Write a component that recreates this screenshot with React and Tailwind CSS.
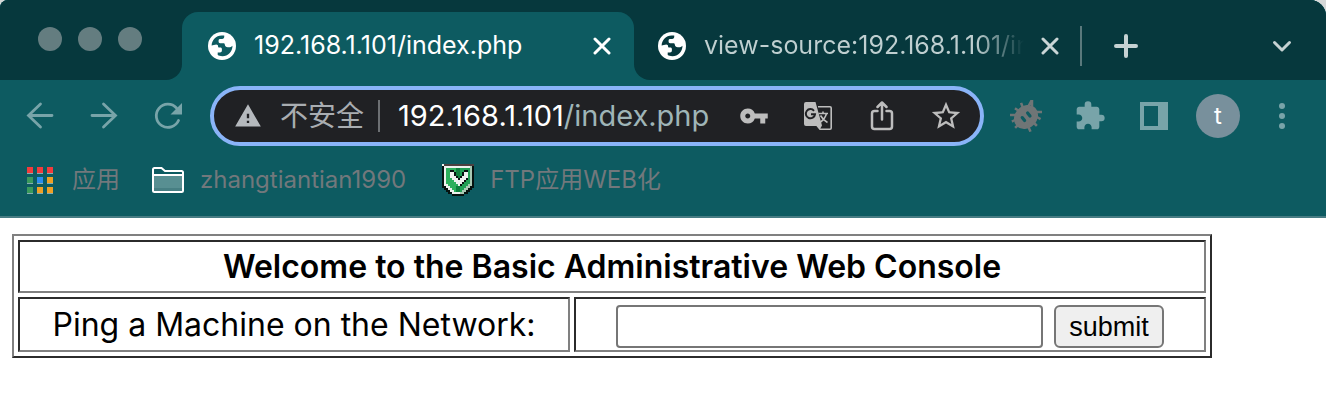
import { MdExtension, MdStarBorder, MdVpnKey, MdWarning } from "react-icons/md";

function Globe() {
  return (
    <svg viewBox="0 0 28 28" className="size-7 shrink-0" aria-hidden="true">
      <circle cx="14" cy="14" r="14" fill="#fff" />
      <path
        className="fill-current"
        d="M3.600 13.600C3.800 8.200 8 3.700 13.600 3.600h2.600c.4 2-.4 3.400-2.200 3.500h-1.800c-1 0-1.600.5-1.600 1.500v1.200c0 .9.6 1.400 1.500 1.400h3.300c.9 0 1.300.5 1.400 1.300.2 1.700 1.300 2.700 3 2.700h1.500c1 0 1.800-.5 3.200-1.500-.1 5.900-4.500 10.500-10 10.600-2.300 0-3.700-.5-4.800-1.200v-2.500h2.300c1.200 0 1.900-.8 1.900-2v-1.500c0-1-.6-1.600-1.600-1.600h-1.100c-.7 0-1.100-.4-1.100-1.100 0-1.200-.7-1.900-1.900-1.900z"
      />
    </svg>
  );
}

function Cross() {
  return (
    <svg viewBox="0 0 18 18" className="size-[18px]" fill="none" stroke="currentColor" strokeWidth="3" strokeLinecap="round" aria-hidden="true">
      <path d="M2 2l14 14M16 2L2 16" />
    </svg>
  );
}

const shieldRows = [
  "WBBBBBBBBBBBBBBB",
  "KWWWWWWWWWWWWWLK",
  "KWGGGGGDDMMMMMLK",
  "KWGGKKGDDMMKKMLK",
  "KWGGWWKDDMKWWMLK",
  "KWGGWWKDDMKWWMLK",
  "KWGGWWWKDKWWWMLK",
  "KWGGGWWWKWWWKMLK",
  "KWGGGGWWWWWKMMLK",
  "KWGGGGGWWWKMMMLK",
  "KWWGGGGGWKMMMLLK",
  "KKWWGGGDDMMMLLKK",
  ".KKWWGGDDMMLLKK.",
  "..KKWWGDDMLLKK..",
  "...KKWWWWLLKK...",
  ".....KKKKKK.....",
];
const shieldColors = { W: "#eef2ef", B: "#4b4040", K: "#061210", L: "#a9c9b4", G: "#2db05c", D: "#0e7f3d", M: "#1f9f54" };

function Shield() {
  return (
    <svg viewBox="0 0 16 16" className="size-8" shapeRendering="crispEdges" aria-hidden="true">
      {shieldRows.flatMap((row, y) =>
        [...row].map((c, x) => (c === "." ? null : <rect key={`${x}-${y}`} x={x} y={y} width="1" height="1" fill={shieldColors[c]} />)),
      )}
    </svg>
  );
}

const appDots = ["#f23c3c", "#f23c3c", "#f23c3c", "#3a9a5c", "#2a8cf0", "#f0a024", "#3a9a5c", "#f0a024", "#f0a024"];

function AppsGrid() {
  return (
    <svg viewBox="0 0 26 27" className="h-[27px] w-[26px]" shapeRendering="crispEdges" aria-hidden="true">
      {appDots.map((c, i) => (
        <g key={i} transform={`translate(${(i % 3) * 10} ${Math.floor(i / 3) * 10})`}>
          <rect width="6" height="7" fill="#86adb0" />
          <rect width="6" height="6" fill={c} />
        </g>
      ))}
    </svg>
  );
}

function Folder() {
  return (
    <svg viewBox="0 0 32 26" className="h-[26px] w-8" aria-hidden="true">
      <path d="M1 2.500Q1 1 2.500 1H9.500L13 4H29.500Q31 4 31 5.500V23.500Q31 25 29.500 25H2.500Q1 25 1 23.500Z" fill="#0d5b61" stroke="#fff" strokeWidth="2" />
      <path d="M2 9h28v15H2z" fill="#588f92" />
      <path d="M2 21h28v3H2z" fill="#477f83" />
      <path d="M1 8h30" stroke="#fff" strokeWidth="2" />
    </svg>
  );
}

function Bug() {
  return (
    <svg viewBox="0 0 32 32" className="size-8" aria-hidden="true">
      <path
        d="M13 8l-1.500-4M18 7l3-5.500M22 6V1M25 12h6M27 17l2.500 1.500M23 22l3 3M18 26l2 4.500M9 11L6 9M6 15H1M7 19l-4 2M8 25l-2 2"
        stroke="#6f7576"
        strokeWidth="2.500"
        fill="none"
        strokeLinecap="square"
      />
      <ellipse cx="16" cy="17" rx="13" ry="11" transform="rotate(-45 16 17)" fill="#6f7576" />
      <path d="M12.200 17.600l2.400 3M17.600 13l2.400 3" stroke="#0d5b61" strokeWidth="3.200" strokeLinecap="round" />
    </svg>
  );
}

function Translate() {
  return (
    <svg viewBox="0 0 28 28" className="size-7" fill="none" aria-hidden="true">
      <path d="M14 4.800H26Q27.200 4.800 27.200 6V26Q27.200 27.200 26 27.200H16L13 23.500" stroke="currentColor" strokeWidth="1.600" />
      <path d="M2 0H11.500L18 23.500L16 27L13.500 24H2Q0 24 0 22V2Q0 0 2 0z" fill="currentColor" />
      <path d="M10 8.800A4.600 4.600 0 1 0 11 12.300H7" stroke="#202124" strokeWidth="2" />
      <path d="M14.500 11.500H24M19 9.500v2M22.500 11.500Q21 17 16.500 20M16.500 13.500Q19 18 23.500 20.500" stroke="currentColor" strokeWidth="1.600" />
    </svg>
  );
}

function ToolButton({ label, children }) {
  return (
    <button type="button" aria-label={label} className="flex h-11 w-16 shrink-0 items-center justify-center">
      {children}
    </button>
  );
}

function TabStrip() {
  return (
    <div className="flex h-20 bg-[#0d5b61]">
      <div className="flex w-[182px] shrink-0 items-start gap-4 rounded-br-2xl bg-[#06383d] pt-[27px] pl-[38px]">
        <span className="size-6 rounded-full bg-[#647d80]" />
        <span className="size-6 rounded-full bg-[#647d80]" />
        <span className="size-6 rounded-full bg-[#647d80]" />
      </div>
      <div className="w-[452px] shrink-0 bg-linear-to-b from-[#06383d] from-50% to-[#0d5b61] to-50% pt-3">
        <div className="flex h-full items-center rounded-t-2xl bg-[#0d5b61] pr-[23px] pl-[26px] text-[#0d5b61]">
          <Globe />
          <span className="ml-[18px] flex-1 truncate text-[25px] text-white">192.168.1.101/index.php</span>
          <button type="button" aria-label="Close tab" className="text-white">
            <Cross />
          </button>
        </div>
      </div>
      <div className="flex min-w-0 flex-1 items-center rounded-bl-2xl bg-[#06383d] pt-3 pr-3 pl-6 text-[#06383d]">
        <Globe />
        <span className="ml-[18px] w-[320px] overflow-hidden bg-linear-to-r from-[#bfcfd0] from-85% to-transparent bg-clip-text text-[25px] whitespace-nowrap text-transparent">
          view-source:192.168.1.101/index.php
        </span>
        <button type="button" aria-label="Close tab" className="ml-[17px] text-[#c9d5d6]">
          <Cross />
        </button>
        <span className="ml-[21px] h-10 w-0.5 bg-[#5a797c]" />
        <button type="button" aria-label="New tab" className="ml-8 text-[#c5d2d3]">
          <svg viewBox="0 0 24 24" className="size-6" fill="none" stroke="currentColor" strokeWidth="4" strokeLinecap="round" aria-hidden="true">
            <path d="M12 2v20M2 12h20" />
          </svg>
        </button>
        <button type="button" aria-label="Search tabs" className="ml-auto flex w-16 justify-center text-[#c5d2d3]">
          <svg viewBox="0 0 20 14" className="h-3.5 w-5" fill="none" stroke="currentColor" strokeWidth="3" strokeLinecap="round" strokeLinejoin="round" aria-hidden="true">
            <path d="M2.500 3.500l7.500 7.500 7.500-7.500" />
          </svg>
        </button>
      </div>
    </div>
  );
}

function Toolbar() {
  return (
    <div className="flex items-center pt-1.5 pr-3 pl-2 text-[#78a4a9]">
      <ToolButton label="Back">
        <svg viewBox="0 0 28 28" className="size-7" fill="none" stroke="currentColor" strokeWidth="2.800" strokeLinecap="round" aria-hidden="true">
          <path d="M26 13.500H3M14.500 2L2.500 13.500l12 11.500" />
        </svg>
      </ToolButton>
      <ToolButton label="Forward">
        <svg viewBox="0 0 28 28" className="size-7" fill="none" stroke="currentColor" strokeWidth="2.800" strokeLinecap="round" aria-hidden="true">
          <path d="M2 13.500h23M13.500 2l12 11.500-12 11.500" />
        </svg>
      </ToolButton>
      <ToolButton label="Reload">
        <svg viewBox="0 0 28 28" className="size-7" aria-hidden="true">
          <path d="M24.500 18.500A11.600 11.600 0 1 1 22.500 6" fill="none" stroke="currentColor" strokeWidth="2.800" strokeLinecap="round" />
          <path d="M28 1v11.500H16.500z" fill="currentColor" />
        </svg>
      </ToolButton>
      <div className="ml-2.5 flex h-15 min-w-0 flex-1 items-center rounded-full border-4 border-[#8ab4f8] bg-[#202124] pr-0.5 pl-5 text-[28px] text-[#bdbdbd]">
        <MdWarning className="size-7 shrink-0 text-[#b5b9bd]" aria-hidden="true" />
        <span className="ml-[18px] shrink-0 text-[#a9adb1]">不安全</span>
        <span className="ml-3.5 h-8 w-0.5 shrink-0 bg-[#6d7073]" />
        <div role="textbox" aria-label="Address" tabIndex={0} className="ml-[18px] min-w-0 flex-1 overflow-hidden text-[29px] whitespace-nowrap text-[#9fb5b7]">
          <span className="text-white">192.168.1.101</span>/index.php
        </div>
        <ToolButton label="Saved passwords">
          <MdVpnKey className="size-[30px]" />
        </ToolButton>
        <ToolButton label="Translate this page">
          <Translate />
        </ToolButton>
        <ToolButton label="Share">
          <svg viewBox="0 0 24 30" className="h-[30px] w-6" fill="none" stroke="currentColor" strokeWidth="2.500" strokeLinecap="round" strokeLinejoin="round" aria-hidden="true">
            <path d="M7.500 10H4.500Q2 10 2 12.500V25.500Q2 28 4.500 28H19.500Q22 28 22 25.500V12.500Q22 10 19.500 10H16.500M12 18.500V2M7.500 6L12 1.500L16.500 6" />
          </svg>
        </ToolButton>
        <ToolButton label="Bookmark this tab">
          <MdStarBorder className="size-[34px]" />
        </ToolButton>
      </div>
      <div className="ml-2.5 flex">
        <ToolButton label="Debug extension">
          <Bug />
        </ToolButton>
        <ToolButton label="Extensions">
          <MdExtension className="size-8" />
        </ToolButton>
        <ToolButton label="Side panel">
          <svg viewBox="0 0 28 28" className="size-7" fill="currentColor" aria-hidden="true">
            <path fillRule="evenodd" d="M0 0h28v28H0zM4 4v20h14V4z" />
          </svg>
        </ToolButton>
        <ToolButton label="Profile">
          <span className="flex size-11 items-center justify-center rounded-full bg-[#78909c] text-2xl text-white">t</span>
        </ToolButton>
        <ToolButton label="Menu">
          <svg viewBox="0 0 6 26" className="h-[26px] w-1.5" fill="currentColor" aria-hidden="true">
            <circle cx="3" cy="3" r="3" />
            <circle cx="3" cy="13" r="3" />
            <circle cx="3" cy="23" r="3" />
          </svg>
        </ToolButton>
      </div>
    </div>
  );
}

function Bookmarks() {
  return (
    <nav aria-label="Bookmarks" className="flex h-[72px] items-center border-b-2 border-[#477c83] pb-0.5 pl-[27px] text-2xl text-[#72787c]">
      <a href="#apps" className="flex items-center gap-[19px]">
        <AppsGrid />
        应用
      </a>
      <a href="#zhangtiantian1990" className="ml-8 flex items-center gap-4">
        <Folder />
        zhangtiantian1990
      </a>
      <a href="#ftp" className="ml-9 flex items-center gap-4">
        <Shield />
        FTP应用WEB化
      </a>
    </nav>
  );
}

export default function App() {
  return (
    <div className="min-h-screen bg-white font-['Inter','Noto_Sans_CJK_SC',sans-serif] text-black">
      <div className="bg-[#d5d8d8]">
        <header className="overflow-hidden rounded-tl-lg rounded-tr-2xl bg-[#0d5b61]">
          <TabStrip />
          <Toolbar />
          <Bookmarks />
        </header>
      </div>
      <main className="px-3 pt-4">
        <form onSubmit={(e) => e.preventDefault()}>
          <table className="w-full max-w-[1200px] border-separate border-spacing-1 border-2 border-t-[#808080] border-r-[#2b2b2b] border-b-[#2b2b2b] border-l-[#808080] text-[32px] leading-[49px]">
            <tbody>
              <tr>
                <th colSpan={2} className="border-2 border-t-[#2b2b2b] border-r-[#808080] border-b-[#808080] border-l-[#2b2b2b] p-0 text-center font-semibold">
                  Welcome to the Basic Administrative Web Console
                </th>
              </tr>
              <tr>
                <td className="w-[552px] border-2 border-t-[#2b2b2b] border-r-[#808080] border-b-[#808080] border-l-[#2b2b2b] p-0 text-center">
                  <label htmlFor="host">Ping a Machine on the Network:</label>
                </td>
                <td className="border-2 border-t-[#2b2b2b] border-r-[#808080] border-b-[#808080] border-l-[#2b2b2b] px-0 pt-1.5 pb-0.5">
                  <div className="flex justify-center gap-[11px] font-['Liberation_Sans',sans-serif] text-[27px] leading-8">
                    <input id="host" type="text" className="h-[43px] w-[427px] rounded border-2 border-[#767676] bg-white px-1" />
                    <button type="submit" className="h-[43px] rounded-md border-2 border-[#767676] bg-[#efefef] px-[13px]">
                      submit
                    </button>
                  </div>
                </td>
              </tr>
            </tbody>
          </table>
        </form>
      </main>
    </div>
  );
}
